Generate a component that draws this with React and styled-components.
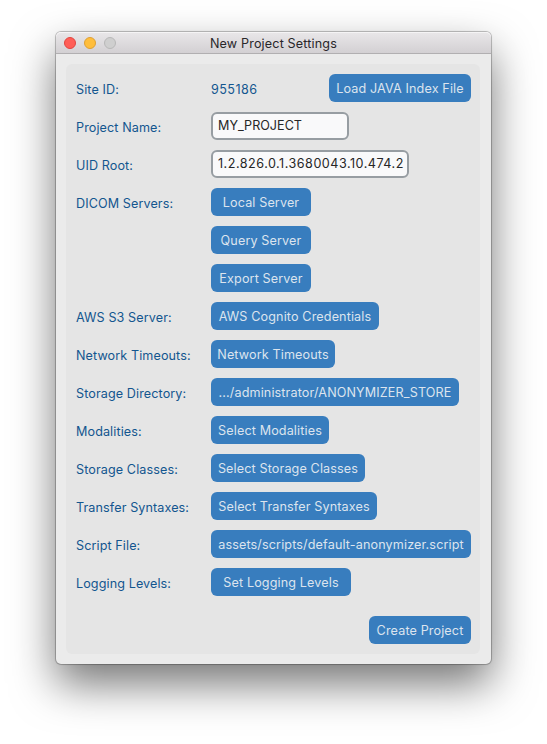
import React from "react";
import styled, { createGlobalStyle } from "styled-components";

const GlobalStyle = createGlobalStyle`
  * { box-sizing: border-box; }
  html, body { margin: 0; background: #fff; overflow: hidden; }
  body { font-family: Inter, "Liberation Sans", sans-serif; }
`;

const Desktop = styled.main`
  width: 547px;
  height: 744px;
  padding: 32px 56px 80px;
  background: #fff;
  overflow: hidden;
`;

const Window = styled.section`
  width: 435px;
  height: 632px;
  display: flex;
  flex-direction: column;
  border-radius: 5px;
  background: #ebebeb;
  box-shadow: 0 0 0 1px rgba(0, 0, 0, 0.18), 0 0 2px rgba(0, 0, 0, 0.25),
    0 20px 44px rgba(0, 0, 0, 0.54);
`;

const TitleBar = styled.header`
  height: 22px;
  flex: none;
  display: grid;
  grid-template-columns: 80px 1fr 80px;
  align-items: center;
  border-radius: 5px 5px 0 0;
  border-bottom: 1px solid #b1afb1;
  background: linear-gradient(#e9e7e9, #d3d0d3);
  box-shadow: inset 0 1px 0 #f5f4f5;
`;

const Lights = styled.div`
  display: flex;
  gap: 8px;
  padding-left: 8px;
`;

const Light = styled.span`
  width: 12px;
  height: 12px;
  border-radius: 50%;
  background: ${(p) => p.$fill};
  border: 1px solid ${(p) => p.$edge};
`;

const Title = styled.h1`
  margin: 0;
  padding-top: 3px;
  text-align: center;
  font-size: 12.6px;
  line-height: 18px;
  font-weight: 400;
  letter-spacing: 0.15px;
  white-space: nowrap;
  color: #29272a;
`;

const Panel = styled.form`
  width: 414px;
  height: 590px;
  margin: 10px 0 0 10px;
  padding: 10px 9px 10px 10px;
  display: flex;
  flex-direction: column;
  gap: 10px;
  border-radius: 6px;
  background: #e5e5e5;
`;

const Row = styled.div`
  height: 28px;
  display: grid;
  grid-template-columns: 135px auto 1fr;
  align-items: center;
`;

const Label = styled.span`
  padding-top: 3px;
  font-size: 12.6px;
  line-height: 18px;
  font-weight: 400;
  letter-spacing: ${(p) => p.$track ?? 0.1}px;
  white-space: nowrap;
  color: #13568f;
`;

const Button = styled.button`
  width: ${(p) => p.$width}px;
  height: 28px;
  padding: 1px 0 0;
  border: 0;
  border-radius: 6px;
  justify-self: end;
  background: #387dbe;
  color: #dce4ee;
  font: 400 12.6px/18px Inter, "Liberation Sans", sans-serif;
  letter-spacing: 0.13px;
  white-space: nowrap;
  text-align: center;
`;

const Field = styled.input`
  width: ${(p) => p.$width}px;
  height: 28px;
  padding: 0 0 2px 5px;
  border: 2px solid #979da2;
  border-radius: 6px;
  outline: 0;
  background: #f9f9fa;
  color: #262626;
  font: 400 12.6px/18px Inter, "Liberation Sans", sans-serif;
  letter-spacing: ${(p) => p.$track || 0}px;
`;

const Footer = styled.footer`
  display: flex;
  justify-content: flex-end;
  margin-top: auto;
`;

const actions = [
  { label: "DICOM Servers:", text: "Local Server", width: 100 },
  { label: "", text: "Query Server", width: 100 },
  { label: "", text: "Export Server", width: 100 },
  { label: "AWS S3 Server:", text: "AWS Cognito Credentials", width: 168 },
  { label: "Network Timeouts:", text: "Network Timeouts", width: 124 },
  { label: "Storage Directory:", text: ".../administrator/ANONYMIZER_STORE", width: 248 },
  { label: "Modalities:", text: "Select Modalities", width: 118 },
  { label: "Storage Classes:", text: "Select Storage Classes", width: 154 },
  { label: "Transfer Syntaxes:", text: "Select Transfer Syntaxes", width: 166 },
  { label: "Script File:", text: "assets/scripts/default-anonymizer.script", width: 260 },
  { label: "Logging Levels:", text: "Set Logging Levels", width: 140 },
];

export default function App() {
  return (
    <>
      <GlobalStyle />
      <Desktop>
        <Window>
          <TitleBar>
            <Lights>
              <Light $fill="#ff5e57" $edge="#e2453f" />
              <Light $fill="#ffbe3c" $edge="#dfa033" />
              <Light $fill="#cfcfcf" $edge="#b8b8b8" />
            </Lights>
            <Title>New Project Settings</Title>
          </TitleBar>
          <Panel>
            <Row>
              <Label>Site ID:</Label>
              <Label $track={0.45}>955186</Label>
              <Button type="button" $width={142}>Load JAVA Index File</Button>
            </Row>
            <Row>
              <Label>Project Name:</Label>
              <Field $width={138} $track={0} defaultValue="MY_PROJECT" />
            </Row>
            <Row>
              <Label>UID Root:</Label>
              <Field $width={198} $track={0.5} defaultValue="1.2.826.0.1.3680043.10.474.2" />
            </Row>
            {actions.map((a) => (
              <Row key={a.text}>
                <Label>{a.label}</Label>
                <Button type="button" $width={a.width}>{a.text}</Button>
              </Row>
            ))}
            <Footer>
              <Button type="button" $width={102}>Create Project</Button>
            </Footer>
          </Panel>
        </Window>
      </Desktop>
    </>
  );
}
